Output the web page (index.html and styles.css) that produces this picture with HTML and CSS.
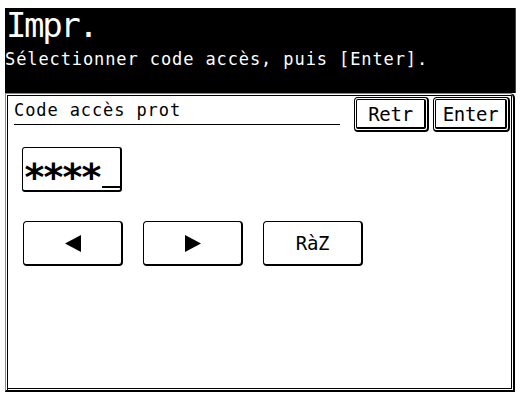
FILE: index.html
```html
<!DOCTYPE html>
<html lang="fr">
<head>
<meta charset="utf-8">
<title>Impr.</title>
<link rel="stylesheet" href="styles.css">
</head>
<body>
<div class="screen">
  <header class="header">
    <div class="title">Impr.</div>
    <div class="subtitle">Sélectionner code accès, puis [Enter].</div>
  </header>
  <section class="panel">
    <div class="panel-head">
      <div class="label">Code accès prot</div>
      <button class="dbtn retr"><span class="dbtn-in">Retr</span></button>
      <button class="dbtn enter"><span class="dbtn-in">Enter</span></button>
    </div>
    <div class="field"><span class="mask">****</span><span class="cursor"></span></div>
    <div class="keys">
      <button class="key"><svg width="16" height="17" viewBox="0 0 16 17"><polygon points="16,0 16,17 0,8.5" fill="#000"/></svg></button>
      <button class="key"><svg width="16" height="17" viewBox="0 0 16 17"><polygon points="0,0 0,17 16,8.5" fill="#000"/></svg></button>
      <button class="key text">RàZ</button>
    </div>
  </section>
</div>
</body>
</html>
```
FILE: styles.css
```css
html, body {
  margin: 0;
  padding: 0;
  background: #fff;
}
body {
  width: 520px;
  height: 393px;
  overflow: hidden;
  font-family: "DejaVu Sans Mono", "Liberation Mono", monospace;
}
.screen {
  padding: 8px 4px 0 5px;
  display: flex;
  flex-direction: column;
}
.header {
  background: #000;
  color: #fff;
  height: 85px;
  box-sizing: border-box;
  box-shadow: inset -1px 0 0 #444;
}
.title {
  font-size: 34px;
  line-height: 34px;
  padding-left: 1px;
  letter-spacing: -2.4px;
}
.subtitle {
  margin-top: 5px;
  font-size: 17px;
  line-height: 24px;
  letter-spacing: 0.9px;
  white-space: nowrap;
}
.panel {
  width: 510px;
  height: 299px;
  box-sizing: border-box;
  border-left: 1px solid #888;
  border-top: 1px solid #888;
  border-right: 2px solid #000;
  border-bottom: 2px solid #000;
  border-top-right-radius: 5px;
  box-shadow: inset 1px 1px 0 #fff, inset 2px 2px 0 #000, inset -1px -1px 0 #fff, inset -2px -2px 0 #000;
  padding: 3px 3px 0 3px;
  display: flex;
  flex-direction: column;
  align-items: flex-start;
}
.panel-head {
  display: flex;
  align-items: flex-start;
  width: 100%;
  box-sizing: border-box;
  padding-left: 5px;
}
.label {
  flex: 1;
  font-size: 17px;
  line-height: 24px;
  letter-spacing: 0.9px;
  padding-top: 1px;
  padding-bottom: 2px;
  border-bottom: 1px solid #000;
  margin-right: 14px;
  white-space: nowrap;
}
.dbtn {
  font: inherit;
  background: #fff;
  color: #000;
  padding: 1px;
  margin: 0;
  height: 35px;
  box-sizing: border-box;
  border: 1px solid #000;
  border-right-width: 2px;
  border-bottom-width: 2px;
  border-radius: 4px;
  display: flex;
}
.retr { width: 75px; }
.enter { width: 77px; margin-left: 4px; }
.dbtn-in {
  flex: 1;
  display: flex;
  align-items: center;
  justify-content: center;
  border: 1px solid #000;
  border-right-width: 2px;
  border-bottom-width: 2px;
  border-radius: 2px;
  font-size: 19px;
  letter-spacing: -0.3px;
}
.field {
  margin-top: 15px;
  margin-left: 13px;
  width: 100px;
  height: 45px;
  box-sizing: border-box;
  border: 1px solid #000;
  border-right-width: 2px;
  border-bottom-width: 2px;
  border-radius: 3px;
  line-height: 42px;
  font-size: 31px;
  padding-left: 0;
  white-space: nowrap;
}
.mask {
  font-size: 38px;
  font-weight: bold;
  letter-spacing: -3.9px;
  line-height: 0;
  vertical-align: -10px;
}
.cursor {
  display: inline-block;
  width: 18px;
  height: 2px;
  background: #000;
  margin-left: 3px;
  vertical-align: -8px;
}
.keys {
  margin-top: 29px;
  margin-left: 14px;
  display: flex;
  gap: 20px;
}
.key {
  width: 100px;
  height: 45px;
  box-sizing: border-box;
  background: #fff;
  color: #000;
  border: 1px solid #000;
  border-right-width: 2px;
  border-bottom-width: 2px;
  border-radius: 4px;
  margin: 0;
  padding: 0;
  display: flex;
  align-items: center;
  justify-content: center;
  font: inherit;
  font-size: 19px;
  letter-spacing: -0.3px;
}
.key svg { display: block; }
```
